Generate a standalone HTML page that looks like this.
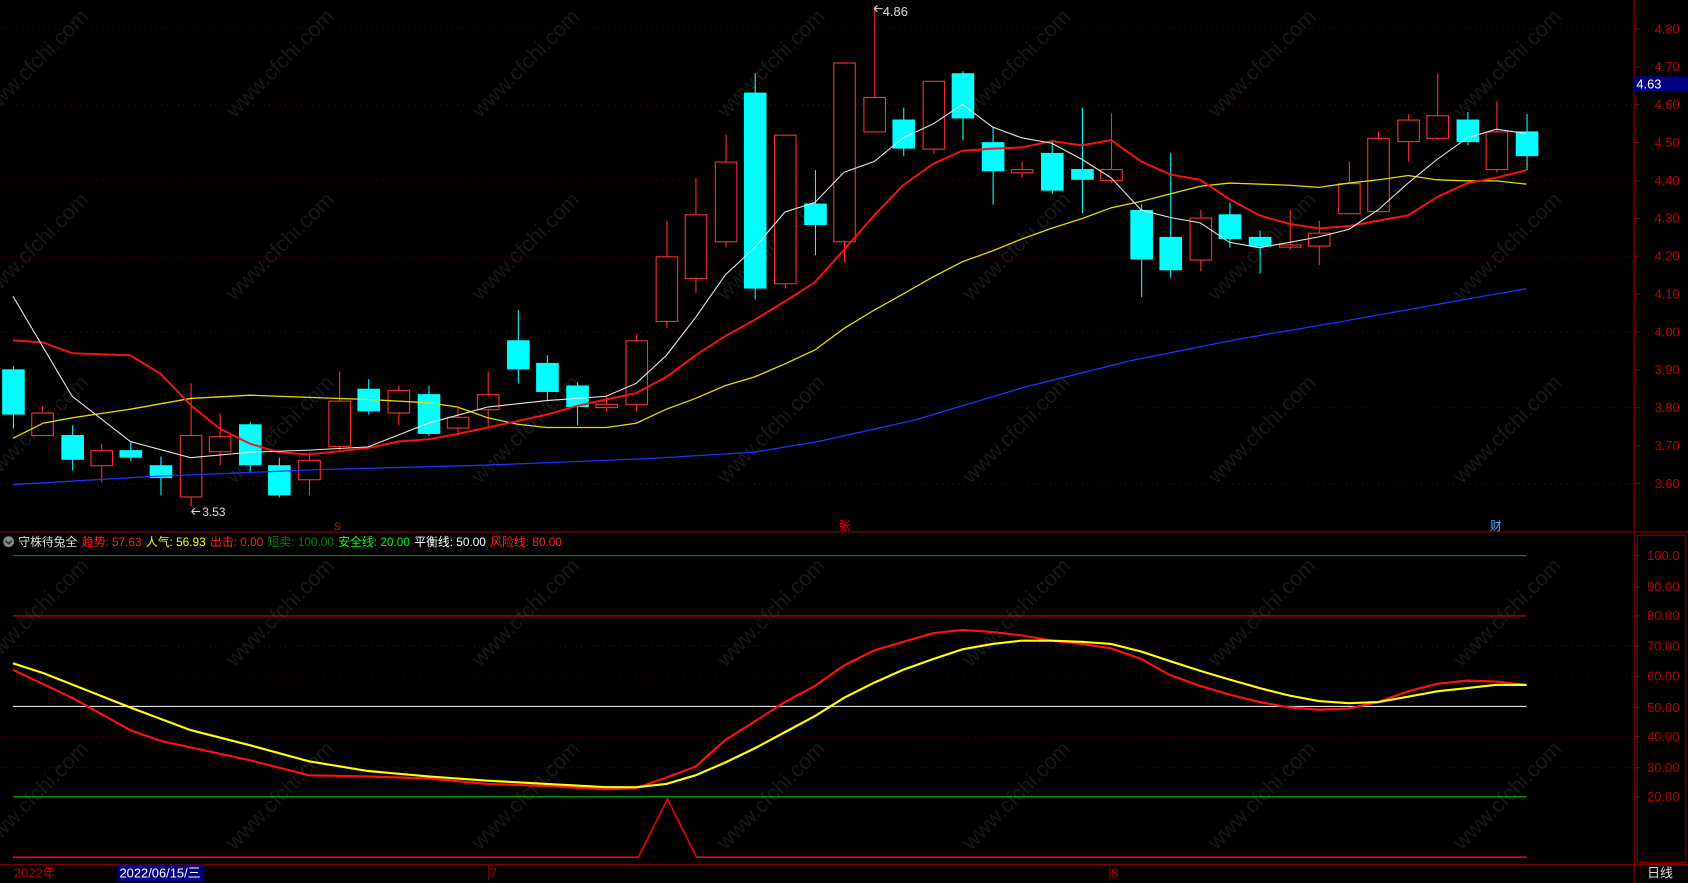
<!DOCTYPE html>
<html><head><meta charset="utf-8"><style>
html,body{margin:0;padding:0;background:#000;overflow:hidden}
svg{display:block}
text{font-family:"Liberation Sans","Noto Sans CJK SC",sans-serif}
</style></head><body>
<svg id="s" width="1688" height="883" viewBox="0 0 1568 820" preserveAspectRatio="none" xmlns="http://www.w3.org/2000/svg">
<rect width="1568" height="820" fill="#000"/>
<g id="wm"></g>
<g id="grid"></g>
<line x1="0" y1="494" x2="1568" y2="494" stroke="#8b0000" stroke-width="1"/>
<line x1="1518" y1="0" x2="1518" y2="820" stroke="#8b0000" stroke-width="1"/>
<line x1="0" y1="803" x2="1568" y2="803" stroke="#8b0000" stroke-width="1"/>
<rect x="1521" y="497" width="45" height="304" fill="none" stroke="#8b0000"/>
<line x1="12" y1="516" x2="1418" y2="516" stroke="#00a000"/>
<line x1="12" y1="572" x2="1418" y2="572" stroke="#e00000"/>
<line x1="12" y1="656" x2="1418" y2="656" stroke="#e0e0e0"/>
<line x1="12" y1="740" x2="1418" y2="740" stroke="#00e000"/>
<polyline points="12,796 593,796 620,742 647,796 1418,796" fill="none" stroke="#f00000" stroke-width="1.5"/>
<g id="c"></g>
<g id="ma"></g>
<g id="ax" font-size="12" fill="#c00000"></g>
<rect x="1518" y="71" width="50" height="14" fill="#000080"/>
<text x="1520" y="82" font-size="12" fill="#fff">4.63</text>
<text x="820" y="15" font-size="12" fill="#ddd">4.86</text>
<text x="188" y="479" font-size="11" fill="#ddd">3.53</text>
<path d="M812 8 l8 0 M812 8 l3 -3 M812 8 l3 3" stroke="#ddd" fill="none"/>
<path d="M178 475 l8 0 M178 475 l3 -3 M178 475 l3 3" stroke="#ddd" fill="none"/>
<text x="310" y="492" font-size="10" fill="#e00">S</text>
<text x="779" y="492" font-size="11" fill="#e00">张</text>
<text x="1384" y="492" font-size="11" fill="#4af">财</text>
<circle cx="8" cy="503" r="5" fill="#888"/>
<path d="M5 502 l3 3 l3 -3" stroke="#222" fill="none" stroke-width="1.3"/>
<text y="507" font-size="11"><tspan x="17" fill="#ddd">守株待兔全</tspan><tspan dx="4" fill="#f22">趋势: 57.63</tspan><tspan dx="4" fill="#ff0">人气: 56.93</tspan><tspan dx="4" fill="#f22">出击: 0.00</tspan><tspan dx="4" fill="#080">短卖: 100.00</tspan><tspan dx="4" fill="#0f0">安全线: 20.00</tspan><tspan dx="4" fill="#fff">平衡线: 50.00</tspan><tspan dx="4" fill="#f22">风险线: 80.00</tspan></text>
<text x="13" y="815" font-size="12" fill="#c00000">2022年</text>
<rect x="109" y="803" width="80" height="16" fill="#000080"/>
<text x="111" y="815" font-size="12" fill="#fff">2022/06/15/三</text>
<line x1="454" y1="803" x2="454" y2="818" stroke="#8b0000"/>
<text x="455" y="815" font-size="12" fill="#c00000">7</text>
<line x1="1031" y1="803" x2="1031" y2="818" stroke="#8b0000"/>
<text x="1032" y="815" font-size="12" fill="#c00000">8</text>
<text x="1530" y="815" font-size="12" fill="#ddd">日线</text>
</svg>
<script>
var NS="http://www.w3.org/2000/svg";
function el(p,t,a,txt){var e=document.createElementNS(NS,t);for(var k in a)e.setAttribute(k,a[k]);if(txt)e.textContent=txt;document.getElementById(p).appendChild(e);return e;}
var C=[[12,'c',343,385,340,398],[39,'r',383,404,377,405],[67,'c',404,427,395,437],[94,'r',418,432,412,448],[121,'c',418,425,410,428],[149,'c',432,444,424,460],[177,'r',404,461,356,470],[204,'r',405,419,384,432],[232,'c',394,432,392,438],[259,'c',432,460,425,462],[287,'r',427,445,420,460],[315,'r',372,414,345,420],[342,'c',361,382,352,385],[370,'r',362,383,358,395],[398,'c',366,403,358,405],[425,'r',387,397,378,405],[453,'r',366,380,345,398],[481,'c',316,343,288,356],[508,'c',337,364,330,372],[536,'c',358,378,355,395],[563,'r',375,378,368,382],[591,'r',316,375,310,382],[619,'r',238,298,205,305],[646,'r',199,258,165,272],[674,'r',150,224,125,230],[701,'c',86,268,68,278],[729,'r',125,263,125,268],[757,'c',189,209,158,237],[784,'r',58,224,58,244],[812,'r',90,122,6,122],[839,'c',111,138,100,145],[867,'r',75,138,75,143],[894,'c',68,110,66,130],[922,'c',132,159,118,190],[949,'r',157,160,150,165],[977,'c',142,177,130,180],[1005,'c',157,167,100,198],[1032,'r',157,167,105,170],[1060,'c',195,241,190,276],[1087,'c',220,251,142,258],[1115,'r',202,241,195,252],[1142,'c',199,222,188,230],[1170,'c',220,229,214,254],[1198,'r',227,229,195,232],[1225,'r',216,228,205,246],[1253,'r',170,198,150,198],[1280,'r',128,196,122,196],[1308,'r',111,131,106,150],[1335,'r',107,128,68,130],[1363,'c',111,132,104,135],[1390,'r',122,157,94,160],[1418,'c',122,145,106,158]];
C.forEach(function(d){var x=d[0],col=d[1]=='c'?'#00ffff':'#ff3030';
el('c','line',{x1:x+.5,x2:x+.5,y1:d[4],y2:d[5],stroke:col});
if(d[1]=='c')el('c','rect',{x:x-10,y:d[2],width:21,height:Math.max(1,d[3]-d[2]),fill:col});
else el('c','rect',{x:x-9.5,y:d[2]+.5,width:20,height:Math.max(1,d[3]-d[2]),fill:'#000',stroke:col});});
function pl(pts,col,w){el('ma','polyline',{points:pts,fill:'none',stroke:col,'stroke-width':w});}
pl("12,450 150,442 300,436 450,432 600,426 700,420 760,410 850,390 950,360 1050,335 1150,315 1250,298 1350,280 1418,268","#2030ff",1.2);
pl("12,407 40,393 67,388 121,380 177,370 232,367 287,369 342,371 398,374 425,378 453,388 481,394 508,397 563,397 591,393 619,380 646,370 674,358 701,350 729,338 757,325 784,305 812,288 839,273 867,257 894,243 922,233 949,222 977,212 1005,203 1032,193 1060,187 1087,180 1115,173 1142,170 1170,171 1198,172 1225,174 1253,170 1280,167 1308,163 1335,167 1363,168 1390,168 1418,171","#e0e000",1.2);
pl("12,316 40,318 67,328 121,330 149,347 177,376 204,398 232,412 259,420 287,422 315,419 342,416 370,410 398,408 425,403 453,397 481,391 508,385 536,377 563,371 591,365 619,350 646,330 674,312 701,297 729,280 757,262 784,232 812,200 839,172 867,152 894,140 922,138 949,137 977,131 1005,135 1032,130 1060,150 1087,162 1115,167 1142,185 1170,200 1198,208 1225,212 1253,210 1280,205 1308,200 1335,183 1363,170 1390,165 1418,158","#ff1010",1.8);
pl("12,275 67,368 121,410 177,425 232,420 287,418 342,415 398,393 453,378 508,372 563,368 591,356 619,330 646,295 674,255 701,230 729,197 757,188 784,160 812,150 839,128 867,115 894,97 922,118 949,128 977,133 1005,148 1032,165 1060,195 1087,202 1115,207 1142,225 1170,230 1198,225 1225,220 1253,213 1280,195 1308,170 1335,148 1363,128 1390,120 1418,124","#e8e8e8",1);
pl("12,622 67,648 121,678 149,688 232,706 287,720 342,721 398,723 453,728 508,730 563,733 591,732 619,722 646,712 674,687 701,670 729,652 757,637 784,618 812,604 839,596 867,588 894,585 922,587 949,590 977,595 1005,598 1032,602 1060,612 1087,627 1115,637 1142,645 1170,652 1198,657 1225,659 1253,658 1280,652 1308,642 1335,635 1363,632 1390,633 1418,636","#ff1010",2);
pl("12,616 40,625 121,657 177,678 232,692 287,707 342,716 398,721 453,725 508,728 563,731 591,731 619,728 646,720 674,708 701,695 729,680 757,665 784,648 812,634 839,622 867,612 894,603 922,598 949,595 977,595 1005,596 1032,598 1060,605 1087,614 1115,623 1142,631 1170,639 1198,646 1225,651 1253,653 1280,652 1308,647 1335,642 1363,639 1390,636 1418,636","#ffff00",2);
for(var i=0;i<=12;i++){var p=(4.8-i*0.1),y=27+i*35.17;el('ax','text',{x:1537,y:y+4},p.toFixed(2));el('ax','line',{x1:1518,x2:1523,y1:y,y2:y,stroke:'#8b0000'});
if(i%2==0)el('grid','line',{x1:0,x2:1518,y1:y,y2:y,stroke:'#600000','stroke-dasharray':'1 4'});}
var L=[["100.0",516],["90.00",545],["80.00",572],["70.00",600],["60.00",628],["50.00",657],["40.00",684],["30.00",713],["20.00",740]];
L.forEach(function(a){el('ax','text',{x:1530,y:a[1]+4},a[0]);el('ax','line',{x1:1518,x2:1523,y1:a[1],y2:a[1],stroke:'#8b0000'});});
[600,628,684,713].forEach(function(y){el('grid','line',{x1:0,x2:1518,y1:y,y2:y,stroke:'#600000','stroke-dasharray':'1 4'});});
for(var gx=-10;gx<1500;gx+=228)for(var gy=110;gy<820;gy+=170){el('wm','text',{x:gx,y:gy,transform:'rotate(-45 '+gx+' '+gy+')','font-size':'20',fill:'#181818'},'www.cfchi.com');}
</script>
</body></html>
